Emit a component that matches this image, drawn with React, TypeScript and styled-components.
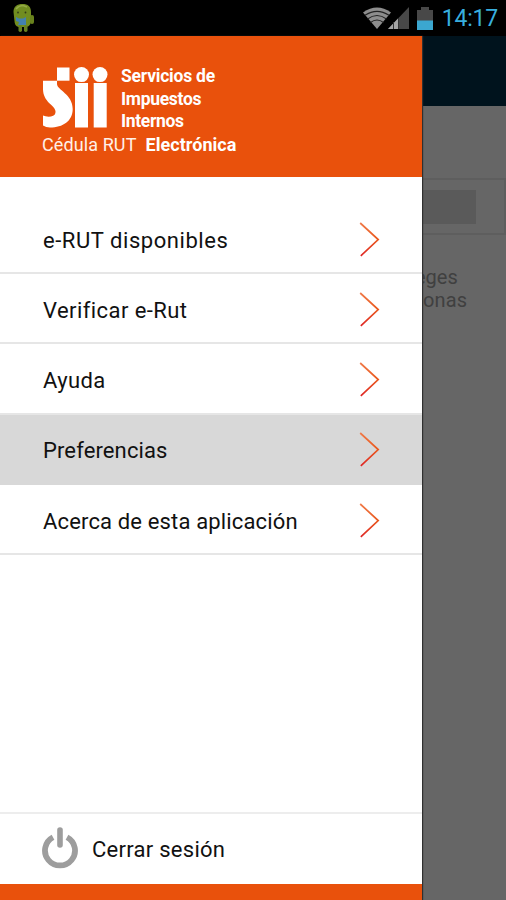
import React from "react";
import styled, { createGlobalStyle } from "styled-components";

const GlobalStyle = createGlobalStyle`
  *, *::before, *::after { box-sizing: border-box; }
  html, body { margin: 0; background: #000; }
  body { font-family: Roboto, sans-serif; }
  svg { display: block; flex: none; }
`;

const Phone = styled.div`
  width: 506px;
  height: 900px;
  display: flex;
  flex-direction: column;
  overflow: hidden;
  background: #000;
`;

const StatusBar = styled.header`
  height: 36px;
  flex: none;
  display: flex;
  align-items: center;
  justify-content: space-between;
  padding: 0 8px 0 12px;
`;

const StatusIcons = styled.div`
  display: flex;
  align-items: center;
`;

const Clock = styled.time`
  margin-left: 9px;
  padding-top: 2px;
  color: #38aede;
  font-size: 23px;
  line-height: 34px;
  letter-spacing: -0.2px;
`;

const Screen = styled.div`
  flex: 1;
  min-height: 0;
  display: grid;
  grid-template-columns: 422px 1fr;
`;

const Drawer = styled.nav`
  display: flex;
  flex-direction: column;
  background: #fff;
  box-shadow: 1px 0 1px #303030;
  z-index: 1;
`;

const Brand = styled.div`
  height: 140.5px;
  flex: none;
  padding: 29px 0 0 42px;
  background: #e9510c;
  color: #fff;
`;

const BrandTop = styled.div`
  display: flex;
  height: 67px;
`;

const BrandName = styled.div`
  margin-left: 13px;
  font-size: 17.5px;
  font-weight: 700;
  line-height: 22.5px;
`;

const BrandLine = styled.span<{ $spacing: number }>`
  display: block;
  letter-spacing: ${(p) => p.$spacing}px;
`;

const BrandCaption = styled.div`
  display: flex;
  font-size: 18px;
  line-height: 25px;
`;

const CaptionLight = styled.span`
  width: 103.5px;
  color: #fff0e8;
  font-weight: 400;
  letter-spacing: 0.1px;
`;

const CaptionBold = styled.span`
  font-weight: 700;
  letter-spacing: 0.05px;
`;

const Menu = styled.ul`
  flex: 1;
  margin: 0;
  padding: 27.4px 0 0;
  list-style: none;
`;

const MenuItem = styled.li<{ $active?: boolean }>`
  height: 70.3px;
  display: flex;
  align-items: center;
  justify-content: space-between;
  padding: 2px 42px 0 43px;
  border-bottom: 2px solid ${(p) => (p.$active ? "#d8d8d8" : "#e6e6e6")};
  background: ${(p) => (p.$active ? "#d8d8d8" : "#fff")};
`;

const Label = styled.span<{ $spacing: number }>`
  padding-top: 3px;
  color: #111;
  font-size: 22px;
  line-height: 28px;
  white-space: nowrap;
  letter-spacing: ${(p) => p.$spacing}px;
`;

const Logout = styled.div`
  height: 72px;
  flex: none;
  display: flex;
  align-items: center;
  gap: 14px;
  padding: 0 0 2px 42px;
  border-top: 2px solid #ededed;
`;

const Footer = styled.div`
  height: 16px;
  flex: none;
  background: #e9510c;
`;

const Page = styled.main`
  display: flex;
  flex-direction: column;
  background: #666;
`;

const PageTitle = styled.div`
  height: 70px;
  background: #00131d;
`;

const Field = styled.div`
  height: 57px;
  margin-top: 72px;
  padding-top: 10px;
  border: 2px solid #5e5e5e;
  border-left: 0;
`;

const FieldValue = styled.div`
  width: 54px;
  height: 34px;
  background: #5a5a5a;
`;

const PageText = styled.p`
  margin: 31px 0 0;
  color: #404040;
  font-size: 20px;
  line-height: 23px;
`;

const PageLine = styled.span<{ $shift: number; $spacing: number }>`
  display: block;
  margin-left: ${(p) => p.$shift}px;
  letter-spacing: ${(p) => p.$spacing}px;
`;

const Robot = () => (
  <svg width="23" height="30" viewBox="0 0 23 30">
    <path d="M1.5 9C1.5 3.5 5 1 10.500 1S19 3.500 19 9v8q0 6-4.500 7h-8q-4-1-4-6z" fill="#718d20" />
    <path d="M4 6Q7 2.500 11 2.500l4 1.500" fill="none" stroke="#94a947" strokeWidth="1.5" />
    <rect x="6.500" y="22" width="3.500" height="7" rx="1.700" fill="#668020" />
    <rect x="12" y="22" width="3.500" height="7" rx="1.700" fill="#668020" />
    <rect x="18" y="12" width="4" height="9" rx="2" fill="#69821d" />
    <circle cx="6" cy="9.500" r="0.900" fill="#303b17" />
    <circle cx="13.500" cy="9.500" r="0.900" fill="#303b17" />
    <path d="M4 14l3 1.500h4l3-1.500v8H6l1-3-3-1z" fill="#4381ae" />
  </svg>
);

const Wifi = () => (
  <svg width="30" height="24" viewBox="0 0 30 24">
    <path d="M1 6.5Q15-3.5 29 6.5L15 23z" fill="#8d8d8d" />
    <path d="M3 9.3Q15 1.5 27 9.3M5.5 13Q15 6 24.5 13M8.5 16.5Q15 11.5 21.5 16.5" fill="none" stroke="#222" strokeWidth="1.1" />
  </svg>
);

const Signal = () => (
  <svg width="21" height="22" viewBox="0 0 21 22">
    <path d="M0 22L21 0v22z" fill="#484848" />
    <path d="M0 22l10-10.5V22z" fill="#a3a3a3" />
    <path d="M5.5 15v7M10.5 11v11" stroke="#333" />
  </svg>
);

const Battery = () => (
  <svg width="16" height="23" viewBox="0 0 16 23">
    <path d="M4 0h8v3h4v20H0V3h4z" fill="#484848" />
    <path d="M0 13.5h16V23H0z" fill="#3ba7d0" />
  </svg>
);

const IconSlot = styled.span<{ $left: number }>`
  margin-left: ${(p) => p.$left}px;
`;

const Logo = () => (
  <svg width="66" height="64" viewBox="0 0 66 64">
    <g fill="#fff">
      <rect x="15" y="2.5" width="12.5" height="13.2" />
      <path d="M1 15.8H15V19C15 25 30.7 29 30.7 44C30.700 56 21 62.500 8 62.500Q4 62.500 1 60.500V50.500Q4 52 9 51.500Q14 50.500 13.500 46C12.500 40 1 37 1 24Z" />
      <circle cx="39.5" cy="9.6" r="7.5" />
      <circle cx="58" cy="9.6" r="7.5" />
      <rect x="33" y="18" width="13" height="44.5" />
      <rect x="51.7" y="18" width="13" height="44.5" />
    </g>
  </svg>
);

const Chevron = () => (
  <svg width="21" height="35" viewBox="0 0 21 35">
    <defs>
      <linearGradient id="chevron" x1="0" y1="0" x2="0" y2="1">
        <stop offset="0" stopColor="#f07a48" />
        <stop offset="0.5" stopColor="#e9571c" />
        <stop offset="1" stopColor="#df2626" />
      </linearGradient>
    </defs>
    <path d="M1.2 1L19.2 17.5L1.8 33.8" fill="none" stroke="url(#chevron)" strokeWidth="1.7" />
  </svg>
);

const Power = () => (
  <svg width="36" height="42" viewBox="0 0 36 42">
    <path d="M11 10.2a15 15 0 1 0 14 0" fill="none" stroke="#9d9d9d" strokeWidth="5.8" />
    <path d="M18 3v15" stroke="#9d9d9d" strokeWidth="5.6" strokeLinecap="round" />
  </svg>
);

const items = [
  { label: "e-RUT disponibles", spacing: 0.55 },
  { label: "Verificar e-Rut", spacing: 0.43 },
  { label: "Ayuda", spacing: 0.4 },
  { label: "Preferencias", spacing: 0.12 },
  { label: "Acerca de esta aplicación", spacing: 0.15 },
];

const activeLabel = "Preferencias";

export default function App() {
  return (
    <>
      <GlobalStyle />
      <Phone>
        <StatusBar>
          <Robot />
          <StatusIcons>
            <Wifi />
            <IconSlot $left={-4}><Signal /></IconSlot>
            <IconSlot $left={8}><Battery /></IconSlot>
            <Clock>14:17</Clock>
          </StatusIcons>
        </StatusBar>
        <Screen>
          <Drawer>
            <Brand>
              <BrandTop>
                <Logo />
                <BrandName>
                  <BrandLine $spacing={-0.22}>Servicios de</BrandLine>
                  <BrandLine $spacing={-0.3}>Impuestos</BrandLine>
                  <BrandLine $spacing={-0.33}>Internos</BrandLine>
                </BrandName>
              </BrandTop>
              <BrandCaption>
                <CaptionLight>Cédula RUT</CaptionLight>
                <CaptionBold>Electrónica</CaptionBold>
              </BrandCaption>
            </Brand>
            <Menu>
              {items.map((item) => (
                <MenuItem key={item.label} $active={item.label === activeLabel}>
                  <Label $spacing={item.spacing}>{item.label}</Label>
                  <Chevron />
                </MenuItem>
              ))}
            </Menu>
            <Logout>
              <Power />
              <Label $spacing={0.27}>Cerrar sesión</Label>
            </Logout>
            <Footer />
          </Drawer>
          <Page>
            <PageTitle />
            <Field><FieldValue /></Field>
            <PageText>
              <PageLine $shift={-7} $spacing={0}>eges</PageLine>
              <PageLine $shift={1} $spacing={0.1}>onas</PageLine>
            </PageText>
          </Page>
        </Screen>
      </Phone>
    </>
  );
}
